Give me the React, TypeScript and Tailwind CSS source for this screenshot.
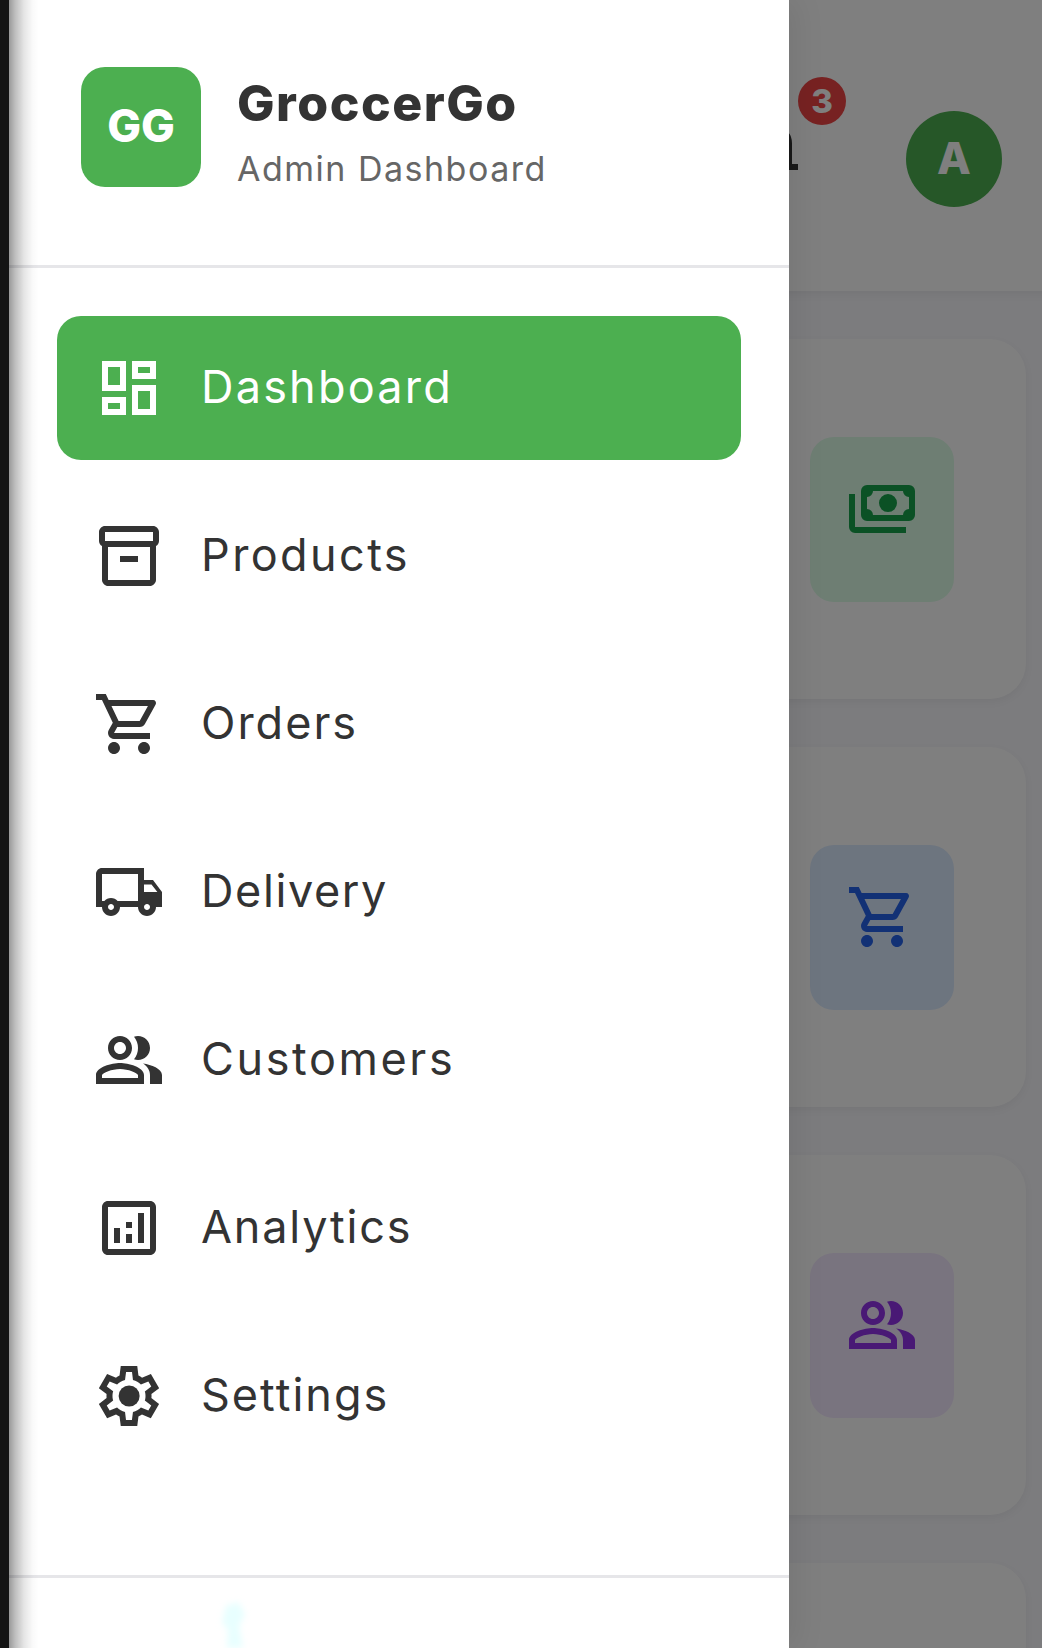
import {
  MdOutlineAnalytics,
  MdOutlineDashboard,
  MdOutlineInventory2,
  MdOutlineLocalShipping,
  MdOutlinePeopleAlt,
  MdOutlineShoppingCart,
} from 'react-icons/md';

const SettingsIcon = ({ className }: { className?: string }) => (
  <svg viewBox="0 0 24 24" fill="currentColor" fillRule="evenodd" className={className}>
    <path d="m9.25 22-.4-3.2q-.325-.125-.612-.3-.288-.175-.563-.375L4.7 19.375l-2.75-4.75 2.575-1.95q-.025-.175-.025-.337v-.675q0-.163.025-.338L1.95 9.375l2.75-4.75 2.975 1.25q.275-.2.575-.375.3-.175.6-.3l.4-3.2h5.5l.4 3.2q.325.125.613.3.287.175.562.375l2.975-1.25 2.75 4.75-2.575 1.95q.025.175.025.338v.675q0 .162-.05.337l2.575 1.95-2.75 4.75-2.95-1.25q-.275.2-.575.375-.3.175-.6.3l-.4 3.2Z M11 20h1.975l.35-2.65q.775-.2 1.438-.588.662-.387 1.212-.937l2.475 1.025.975-1.7-2.15-1.625q.125-.35.175-.737.05-.388.05-.788t-.05-.788q-.05-.387-.175-.737l2.15-1.625-.975-1.7-2.475 1.05q-.55-.575-1.212-.963-.663-.387-1.438-.587L13 4h-1.975l-.35 2.65q-.775.2-1.438.587-.662.388-1.212.938L5.55 7.15l-.975 1.7 2.15 1.6q-.125.375-.175.75-.05.375-.05.8 0 .4.05.775.05.375.175.75l-2.15 1.625.975 1.7 2.475-1.05q.55.575 1.212.962.663.388 1.438.588Z" />
    <circle cx="12.05" cy="12" r="3.5" />
  </svg>
);

const PaymentsIcon = ({ className }: { className?: string }) => (
  <svg viewBox="0 0 24 24" fill="currentColor" className={className}>
    <path d="M14 13q-1.25 0-2.125-.875T11 10t.875-2.125T14 7t2.125.875T17 10t-.875 2.125T14 13m-7 3q-.825 0-1.412-.587T5 14V6q0-.825.588-1.412T7 4h14q.825 0 1.413.588T23 6v8q0 .825-.587 1.413T21 16zm2-2h10q0-.825.588-1.412T21 12V8q-.825 0-1.412-.587T19 6H9q0 .825-.587 1.413T7 8v4q.825 0 1.413.588T9 14m11 6H3q-.825 0-1.412-.587T1 18V7h2v11h17z" />
  </svg>
);

const BellIcon = ({ className }: { className?: string }) => (
  <svg viewBox="0 0 24 24" fill="currentColor" className={className}>
    <path d="M4 19v-2h2v-7q0-2.075 1.25-3.687T10.5 4.2v-.7q0-.625.438-1.062T12 2t1.063.438T13.5 3.5v.7q2 .5 3.25 2.113T18 10v7h2v2zm8 3q-.825 0-1.412-.587T10 20h4q0 .825-.587 1.413T12 22m-4-5h8v-7q0-1.65-1.175-2.825T12 6 9.175 7.175 8 10z" />
  </svg>
);

const navItems = [
  { label: 'Dashboard', icon: MdOutlineDashboard, tracking: 'tracking-[2.2px]', active: true },
  { label: 'Products', icon: MdOutlineInventory2, tracking: 'tracking-[2.4px]' },
  { label: 'Orders', icon: MdOutlineShoppingCart, tracking: 'tracking-[2px]' },
  { label: 'Delivery', icon: MdOutlineLocalShipping, tracking: 'tracking-[1.6px]' },
  { label: 'Customers', icon: MdOutlinePeopleAlt, tracking: 'tracking-[2.6px]' },
  { label: 'Analytics', icon: MdOutlineAnalytics, tracking: 'tracking-[1.8px]' },
  { label: 'Settings', icon: SettingsIcon, tracking: 'tracking-[2px]' },
];

const statCards = [
  { key: 'revenue', icon: PaymentsIcon, chip: 'bg-[#dcfce7] text-[#16a34a]' },
  { key: 'orders', icon: MdOutlineShoppingCart, chip: 'bg-[#dbeafe] text-[#2563eb]' },
  { key: 'customers', icon: MdOutlinePeopleAlt, chip: 'bg-[#f3e8ff] text-[#9333ea]' },
  { key: 'products', icon: MdOutlineInventory2, chip: 'bg-[#ffedd5] text-[#ea580c]' },
];

function Page() {
  return (
    <div className="w-[1065px] h-full shrink-0 bg-[#f8f8fc]">
      <header className="h-[291px] flex items-start justify-end pr-[72px] bg-white shadow-[0_3px_9px_rgba(0,0,0,0.06)]">
        <div className="relative mt-[113px] mr-[96px] text-[#333333]">
          <BellIcon className="size-[72px]" />
          <span className="absolute -top-[36px] left-[60px] size-12 rounded-full bg-[#ef4444] text-white text-[33px] leading-12 font-extrabold text-center">
            3
          </span>
        </div>
        <div className="mt-[111px] size-24 rounded-full bg-[#4caf50] flex items-center justify-center pb-[2px] text-white text-[44px] font-extrabold">
          A
        </div>
      </header>
      <main className="flex flex-col gap-12 p-12">
        {statCards.map(({ key, icon: Icon, chip }) => (
          <div
            key={key}
            className="h-[360px] shrink-0 rounded-[36px] bg-white flex justify-end pt-[98px] pr-[72px] shadow-[0_3px_9px_rgba(0,0,0,0.05)]"
          >
            <div className={`w-36 h-[165px] rounded-3xl p-9 ${chip}`}>
              <Icon className="size-[72px]" />
            </div>
          </div>
        ))}
      </main>
    </div>
  );
}

function Drawer() {
  return (
    <aside className="absolute inset-y-0 left-0 w-[779.5px] flex flex-col bg-white shadow-[6px_0_30px_rgba(0,0,0,0.08)]">
      <div className="h-[268px] shrink-0 flex items-start gap-9 pt-[67px] px-[72px] border-b-3 border-[#e6e6e9]">
        <div className="size-[120px] rounded-3xl bg-[#4caf50] flex items-center justify-center pb-[2px] text-white text-[45px] font-extrabold">
          GG
        </div>
        <div className="pt-[6px]">
          <h2 className="text-[50px] leading-[60px] font-extrabold text-[#333333] tracking-[1.5px]">GroccerGo</h2>
          <p className="mt-[14px] text-[34px] leading-[44px] text-[#666666] tracking-[1.5px]">Admin Dashboard</p>
        </div>
      </div>

      <nav className="h-[1307px] shrink-0 flex flex-col gap-6 px-12 pt-[47.5px]">
        {navItems.map(({ label, icon: Icon, tracking, active }) => (
          <a
            key={label}
            className={`h-36 flex items-center gap-9 px-9 rounded-3xl ${active ? 'bg-[#4caf50] text-white' : 'text-[#333333]'}`}
          >
            <Icon className="size-[72px]" />
            <span className={`pb-[2px] text-[45px] leading-[60px] ${tracking}`}>{label}</span>
          </a>
        ))}
      </nav>

      <div className="flex-1 border-t-3 border-[#e6e6e9] pl-[209px] pt-6">
        <svg viewBox="0 0 30 46" className="w-[30px] h-[46px] blur-[3px]" fill="#e8ffff">
          <path d="M8 4 L20 0 L27 12 L21 24 L25 46 L9 46 L10 28 L4 20 Z" />
        </svg>
      </div>

      {/* edge shading from the device frame */}
      <div className="absolute inset-y-0 left-0 w-[30px] bg-[linear-gradient(to_right,rgba(0,0,0,0.4),rgba(0,0,0,0.26)_20%,rgba(0,0,0,0.1)_50%,rgba(0,0,0,0.02)_80%,transparent)]" />
    </aside>
  );
}

export default function App() {
  return (
    <div className="h-[1648px] w-[1042px] flex overflow-hidden bg-[#141414] pl-[9px] font-['Inter',sans-serif]">
      <div className="relative w-full h-full overflow-hidden">
        <Page />
        <div className="absolute inset-0 bg-black/50" />
        <Drawer />
      </div>
    </div>
  );
}
